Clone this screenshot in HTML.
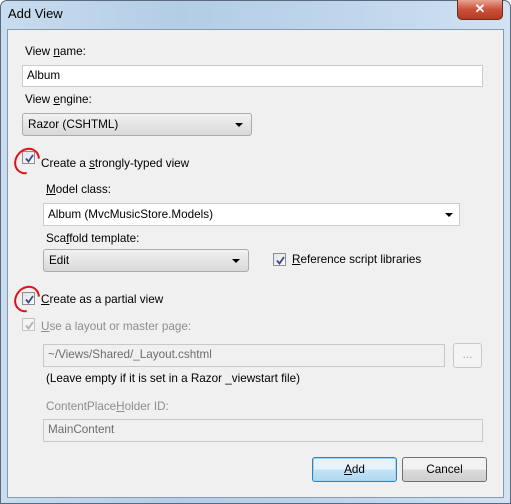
<!DOCTYPE html>
<html><head><meta charset="utf-8"><style>
*{box-sizing:border-box;margin:0;padding:0}
body{width:511px;height:504px;overflow:hidden;background:#fff;font-family:"Liberation Sans",sans-serif;font-size:11.7px;color:#000;position:relative}
.frame{position:absolute;left:0;top:0;width:511px;height:504px;border:1px solid #5a6a7c;border-radius:7px 7px 0 0;background:linear-gradient(90deg,#c9dcef 0%,#b3cde6 35%,#c0d6ec 70%,#d0e2f3 100%)}
.title{position:absolute;left:8px;top:6px;font-size:13px;color:#000}
.close{position:absolute;left:457px;top:0;width:46px;height:20px;border:1px solid #6b2a22;border-top:none;border-radius:0 0 5px 5px;background:linear-gradient(#e8a493,#c9503a 50%,#b83a22);color:#fff;font-weight:bold;text-align:center;font-size:13px;line-height:18px}
.inner{position:absolute;left:7px;top:29px;width:497px;height:469px;background:#f0f0f0;border:1px solid #8a9bad}
.a{position:absolute;white-space:nowrap}
.tb{position:absolute;background:#fff;border:1px solid #c8ccd2;padding-left:4px;line-height:20px}
.tb.d{background:#f0f0f0;color:#6d6d6d;border-color:#c8c8c8}
.cb{position:absolute;border:1px solid #acacac;border-radius:3px;background:linear-gradient(#f2f2f2,#d8d8d8);padding-left:5px;line-height:21px}
.cb:after{content:"";position:absolute;right:8px;top:9px;border:4px solid transparent;border-top:4px solid #000;border-bottom:none}
.chk{position:absolute;width:13px;height:13px;border:1px solid #8f8f8f;background:linear-gradient(135deg,#dfe3ea,#fafafa)}
.chk svg{position:absolute;left:1px;top:1px}
.chk.d{border-color:#c4c4c4;background:#f4f4f4}
.circ{position:absolute;width:24px;height:28px;border:2px solid #e0101a;border-radius:50%;border-right-color:transparent;transform:rotate(40deg)}
.btn{position:absolute;border:1px solid #707070;border-radius:3px;background:linear-gradient(#f2f2f2 50%,#dcdcdc 50%,#cfcfcf);text-align:center;line-height:23px}
.btn.def{border-color:#3c7fb1;background:linear-gradient(#e6f3fb 50%,#c4e4f6 50%,#b0d8ef);box-shadow:inset 0 0 0 1px #9fd8f5}
u{text-decoration:underline}
.g{color:#8d8d8d}
</style></head><body>
<div class="frame"></div>
<div class="title">Add View</div>
<div class="close">✕</div>
<div class="inner"></div>
<div class="a" style="left:25px;top:45px">View <u>n</u>ame:</div>
<div class="tb" style="left:22px;top:65px;width:461px;height:22px">Album</div>
<div class="a" style="left:25px;top:93px">View <u>e</u>ngine:</div>
<div class="cb" style="left:22px;top:113px;width:230px;height:23px">Razor (CSHTML)</div>

<div class="chk" style="left:22px;top:151px"><svg width="11" height="11"><path d="M2 5.5L4.5 8.5L9 2" stroke="#3c4a8a" stroke-width="1.8" fill="none"/></svg></div>
<div class="circ" style="left:15px;top:147px"></div>
<div class="a" style="left:41px;top:157px">Create a <u>s</u>trongly-typed view</div>
<div class="a" style="left:46px;top:183px"><u>M</u>odel class:</div>
<div class="tb" style="left:43px;top:203px;width:417px;height:23px;line-height:21px">Album (MvcMusicStore.Models)<span style="position:absolute;right:6px;top:9px;border:4px solid transparent;border-top:4px solid #000;border-bottom:none"></span></div>
<div class="a" style="left:46px;top:232px">Sca<u>f</u>fold template:</div>
<div class="cb" style="left:43px;top:249px;width:206px;height:23px">Edit</div>
<div class="chk" style="left:273px;top:253px"><svg width="11" height="11"><path d="M2 5.5L4.5 8.5L9 2" stroke="#3c4a8a" stroke-width="1.8" fill="none"/></svg></div>
<div class="a" style="left:292px;top:253px"><u>R</u>eference script libraries</div>

<div class="chk" style="left:22px;top:292px"><svg width="11" height="11"><path d="M2 5.5L4.5 8.5L9 2" stroke="#3c4a8a" stroke-width="1.8" fill="none"/></svg></div>
<div class="circ" style="left:15px;top:285px"></div>
<div class="a" style="left:41px;top:293px"><u>C</u>reate as a partial view</div>
<div class="chk d" style="left:22px;top:318px"><svg width="11" height="11"><path d="M2 5.5L4.5 8.5L9 2" stroke="#b0b0b0" stroke-width="1.8" fill="none"/></svg></div>
<div class="a g" style="left:41px;top:320px"><u>U</u>se a layout or master page:</div>
<div class="tb d" style="left:43px;top:344px;width:402px;height:23px">~/Views/Shared/_Layout.cshtml</div>
<div class="btn" style="left:453px;top:343px;width:29px;height:25px;border-color:#c8c8c8;background:#f4f4f4;color:#aaa;line-height:22px">...</div>
<div class="a" style="left:46px;top:372px">(Leave empty if it is set in a Razor _viewstart file)</div>
<div class="a g" style="left:46px;top:400px">ContentPlace<u>H</u>older ID:</div>
<div class="tb d" style="left:43px;top:419px;width:440px;height:23px">MainContent</div>
<div class="btn def" style="left:312px;top:457px;width:85px;height:25px"><u>A</u>dd</div>
<div class="btn" style="left:402px;top:457px;width:85px;height:25px">Cancel</div>
</body></html>
